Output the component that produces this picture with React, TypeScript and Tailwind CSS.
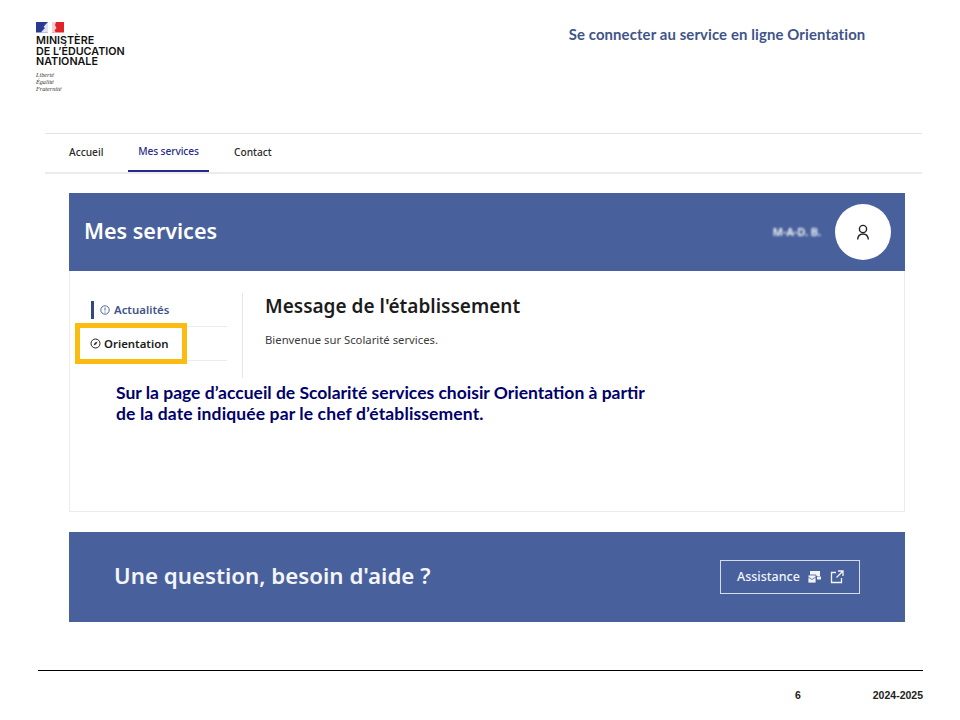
import React from "react";

const ui = "font-['Noto_Sans','Inter',sans-serif]";

function Flag() {
  return (
    <svg width="28" height="11" viewBox="0 0 28 11" className="block">
      <rect x="0" y="0" width="12" height="10.5" fill="#2a3a92" />
      <path d="M12 0 L10 2 L7.5 5 L9 6 L6.5 8.5 L5 10.5 L12 10.5 Z" fill="#dfe3ef" />
      <rect x="16" y="0" width="12" height="10.5" fill="#e1242b" />
      <path d="M16 0 L20 0 L19 3 L20.5 6 L18.5 8.5 L20 10.5 L16 10.5 Z" fill="#f6d0d0" />
    </svg>
  );
}

function Logo() {
  return (
    <div className="flex flex-col">
      <Flag />
      <div className="mt-[3px] font-['Inter',sans-serif] text-[10.75px] font-semibold leading-[10.7px] text-[#111] whitespace-nowrap">
        <div>MINISTÈRE</div>
        <div>DE L’ÉDUCATION</div>
        <div>NATIONALE</div>
      </div>
      <div className="mt-[3px] font-['Liberation_Serif',serif] italic text-[6.2px] leading-[7px] text-[#333]">
        <div>Liberté</div>
        <div>Égalité</div>
        <div>Fraternité</div>
      </div>
    </div>
  );
}

function Top() {
  return (
    <div className="flex h-[133px] pl-[36px] pt-[22px]">
      <Logo />
      <div className="ml-[444px] mt-[3px] font-['Lato',sans-serif] text-[14.9px] font-bold leading-[18px] tracking-[0.12px] text-[#3f5488] whitespace-nowrap">
        Se connecter au service en ligne Orientation
      </div>
    </div>
  );
}

function Nav() {
  return (
    <div className={`${ui} ml-[45px] w-[877px] h-[41px] border-t border-[#e3e3e3] flex flex-col text-[10.2px] font-medium text-[#2a2a2a]`}>
      <div className="h-[38px] flex">
        <div className="w-[83px] flex items-center pl-[24px] pb-[1px]">Accueil</div>
        <div className="w-[81px] flex items-center justify-center pb-[1px] border-b-2 border-[#28288f] text-[#2c2c8c] tracking-[-0.1px]">Mes services</div>
        <div className="flex items-center pl-[25px] pb-[1px]">Contact</div>
      </div>
      <div className="h-[2px] bg-[#ececec]" />
    </div>
  );
}

function UserIcon() {
  return (
    <svg width="16" height="17" viewBox="0 0 16 17" fill="none" stroke="#222" strokeWidth="1.4">
      <circle cx="8" cy="5" r="3.6" />
      <path d="M2.6 15.5 C3 11.5 5 10 8 10 C11 10 13 11.5 13.4 15.5" />
    </svg>
  );
}

function Actu() {
  return (
    <svg width="10" height="10" viewBox="0 0 10 10" fill="none" stroke="#3f5488" strokeWidth="0.9">
      <circle cx="5" cy="5" r="4.2" />
      <path d="M5 2.6 V5.6 M5 6.6 V7.6" />
    </svg>
  );
}

function Compass() {
  return (
    <svg width="11" height="11" viewBox="0 0 11 11" fill="none" stroke="#222" strokeWidth="1">
      <circle cx="5.5" cy="5.5" r="4.5" />
      <path d="M3.5 7.5 L4.8 4.8 L7.5 3.5 L6.2 6.2 Z" fill="#222" stroke="none" />
    </svg>
  );
}

function Sidebar() {
  return (
    <div className="w-[157px] shrink-0 pl-[21px] pt-[28px]">
      <div className="h-[28px] w-[136px] border-b border-[#ececec] pb-[6px] flex items-center font-semibold text-[11.4px] text-[#3f5488]">
        <span className="h-[18px] w-[3px] bg-[#35477f] mr-[6px]" />
        <Actu />
        <span className="ml-[4px]">Actualités</span>
      </div>
      <div className="relative h-[34px] w-[136px] border-b border-[#ececec] flex items-center font-semibold text-[11.4px] text-[#1c1c1c]">
        <span className="-ml-px flex"><Compass /></span>
        <span className="ml-[3px]">Orientation</span>
        <div className="absolute left-[-16px] top-[-4px] w-[112px] h-[41px] border-[5px] border-[#fbbb10]" />
      </div>
    </div>
  );
}

function Content() {
  return (
    <div className="border border-t-0 border-[#ececec] h-[241px] flex relative bg-white">
      <Sidebar />
      <div className="ml-[15px] border-l border-[#e6e6e6] h-[85px] mt-[22px]" />
      <div className={`ml-[22px] mt-[22px] h-[78px] ${ui}`}>
        <h2 className="text-[19px] font-semibold leading-[26px] text-[#1c1c1c] whitespace-nowrap">Message de l'établissement</h2>
        <p className="mt-[13px] text-[11.3px] leading-[16px] text-[#3c3c3c] whitespace-nowrap font-normal">Bienvenue sur Scolarité services.</p>
      </div>
      <div className="absolute left-[46px] top-[112px] font-['Lato',sans-serif] text-[17.5px] font-bold leading-[20.5px] text-[#00006b] w-[600px]">
        Sur la page d’accueil de Scolarité services choisir Orientation à partir
        <br />
        <span className="tracking-[0.12px]">de la date indiquée par le chef d’établissement.</span>
      </div>
    </div>
  );
}

function AssistIcons() {
  return (
    <>
      <svg width="15" height="14" viewBox="0 0 15 14" className="ml-[7px]">
        <path d="M3 1 H13 V6 H9 V9 H3 Z" fill="#f2f4fa" />
        <path d="M1 5 H9 V13 H1 Z" fill="#f2f4fa" stroke="#48619c" strokeWidth="0.8" />
        <path d="M1 7 L5 9.5 L9 7" fill="none" stroke="#48619c" strokeWidth="0.8" />
        <rect x="10" y="6.5" width="4" height="3" fill="#f2f4fa" />
      </svg>
      <svg width="14" height="14" viewBox="0 0 14 14" fill="none" stroke="#f2f4fa" strokeWidth="1.3" className="ml-[8px]">
        <path d="M6 2.5 H1.5 V12.5 H11.5 V8" />
        <path d="M8 1 H13 V6 M13 1 L6.5 7.5" />
      </svg>
    </>
  );
}

export default function App() {
  return (
    <div className="relative w-[960px] h-[720px] bg-white overflow-hidden">
      <Top />
      <Nav />
      <div className={`${ui} ml-[69px] w-[836px] mt-[19px]`}>
        <div className="h-[78px] bg-[#48619c] flex items-center pl-[15px] pr-[14px]">
          <h1 className="text-[21.5px] font-semibold text-white flex-1 pb-[1px]">Mes services</h1>
          <span className="text-[11px] font-semibold text-white blur-[1px] mr-[14px]">M-A-D. B.</span>
          <div className="w-[56px] h-[56px] rounded-full bg-white flex items-center justify-center">
            <UserIcon />
          </div>
        </div>
        <Content />
        <div className="mt-[20px] h-[90px] bg-[#48619c] flex items-center pl-[45px] pr-[45px]">
          <h2 className="flex-1 text-[22.3px] font-semibold text-[#f4f5fa] pb-[2px]">Une question, besoin d'aide ?</h2>
          <div className="w-[140px] h-[34px] border border-[#d5dcee] flex items-center pl-[16px] text-[12.5px] font-medium text-[#f2f4fa]">
            Assistance
            <AssistIcons />
          </div>
        </div>
      </div>
      <div className="ml-[38px] mt-[48px] w-[885px] border-t border-black" />
      <div className="ml-[38px] w-[885px] mt-[18px] flex justify-end font-['Liberation_Sans',sans-serif] text-[10.5px] font-bold leading-[12px] text-[#222]">
        <span className="mr-[72px]">6</span>
        <span>2024-2025</span>
      </div>
    </div>
  );
}
